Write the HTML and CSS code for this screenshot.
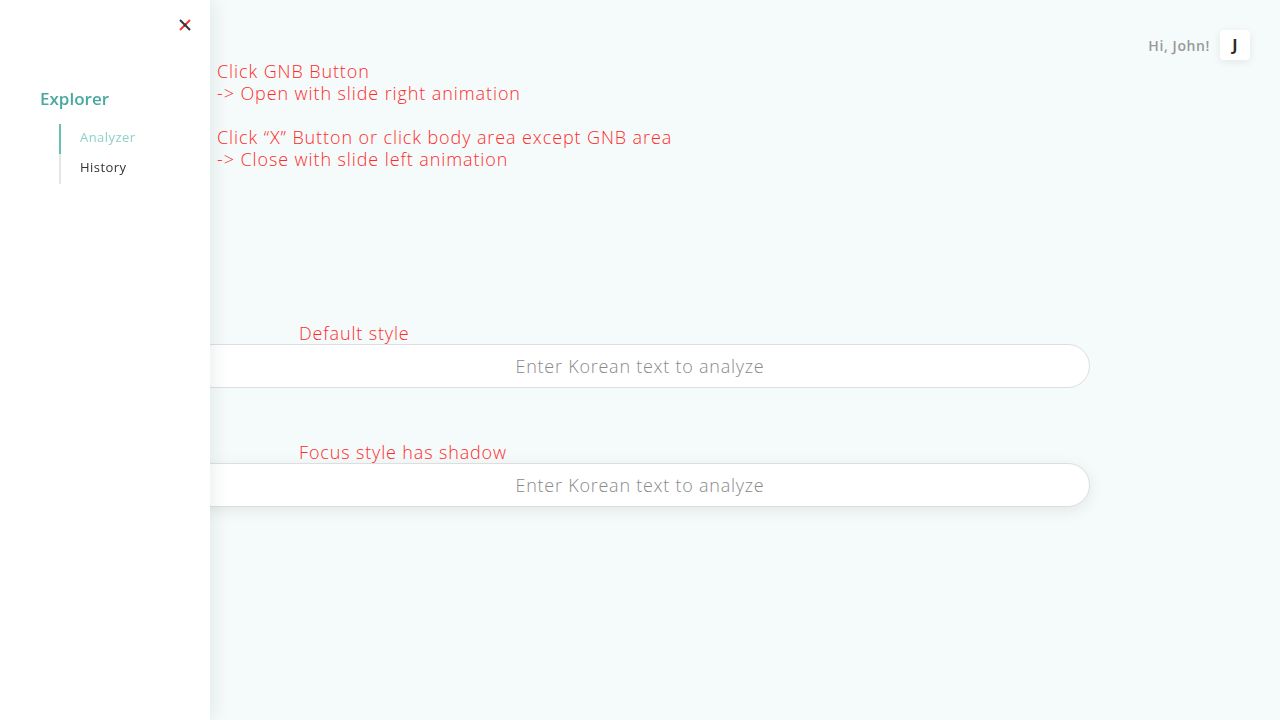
FILE: index.html
```html
<!DOCTYPE html>
<html lang="en">
<head>
<meta charset="utf-8">
<title>Explorer</title>
<link rel="stylesheet" href="styles.css">
</head>
<body>
<main class="main">
  <header class="topbar">
    <span class="greeting">Hi, John!</span>
    <span class="avatar">J</span>
  </header>
  <div class="notes">
    <p>Click GNB Button<br>-&gt; Open with slide right animation</p>
    <p>Click “X” Button or click body area except GNB area<br>-&gt; Close with slide left animation</p>
  </div>
  <section class="inputs">
    <div class="field">
      <div class="label">Default style</div>
      <div class="search">Enter Korean text to analyze</div>
    </div>
    <div class="field">
      <div class="label">Focus style has shadow</div>
      <div class="search focus">Enter Korean text to analyze</div>
    </div>
  </section>
</main>
<aside class="gnb">
  <div class="gnb-top">
    <button class="close" aria-label="Close">
      <svg width="14" height="14" viewBox="0 0 14 14">
        <line x1="2" y1="2" x2="12" y2="12" stroke="#333" stroke-width="2"/>
        <line x1="12" y1="2" x2="2" y2="12" stroke="#f03a3a" stroke-width="2"/>
        <line x1="8" y1="6" x2="6" y2="8" stroke="#333" stroke-width="2"/>
      </svg>
    </button>
  </div>
  <nav class="menu">
    <div class="menu-title">Explorer</div>
    <ul class="submenu">
      <li class="active">Analyzer</li>
      <li>History</li>
    </ul>
  </nav>
</aside>
</body>
</html>
```
FILE: styles.css
```css
html, body {
  margin: 0;
  padding: 0;
}
body {
  background: #f5fafa;
  font-family: "Open Sans", "DejaVu Sans", sans-serif;
  width: 1280px;
  height: 720px;
  overflow: hidden;
}
.main {
  display: flex;
  flex-direction: column;
  padding: 30px 30px 0 217px;
}
.topbar {
  display: flex;
  justify-content: flex-end;
  align-items: center;
  gap: 10px;
  height: 30px;
}
.greeting {
  font-size: 14px;
  font-weight: 600;
  color: #999;
  letter-spacing: 0.6px;
}
.avatar {
  width: 30px;
  height: 30px;
  background: #fff;
  border-radius: 4px;
  box-shadow: 0 2px 8px rgba(0, 0, 0, 0.08);
  display: flex;
  align-items: center;
  justify-content: center;
  font-weight: 700;
  font-size: 16px;
  color: #2a2a2a;
}
.notes {
  color: #ff2a2a;
  font-size: 18px;
  font-weight: 300;
  line-height: 22px;
  letter-spacing: 0.9px;
}
.notes p {
  margin: 0 0 22px 0;
}
.notes p:last-child {
  margin-bottom: 0;
}
.inputs {
  margin-top: 152px;
  margin-left: -27px;
  width: 900px;
  display: flex;
  flex-direction: column;
  gap: 53px;
}
.label {
  padding-left: 109px;
  color: #ff2a2a;
  font-size: 18px;
  font-weight: 300;
  line-height: 22px;
  letter-spacing: 0.85px;
}
.search {
  height: 42px;
  border: 1px solid #dedede;
  border-radius: 22px;
  background: #fff;
  display: flex;
  align-items: center;
  justify-content: center;
  font-size: 18px;
  font-weight: 300;
  color: #8a8a8a;
  letter-spacing: 0.75px;
}
.search.focus {
  box-shadow: 0 4px 16px rgba(0, 0, 0, 0.08);
}
.gnb {
  position: fixed;
  left: 0;
  top: 0;
  width: 210px;
  height: 720px;
  background: #fff;
  box-shadow: 4px 0 16px rgba(0, 60, 60, 0.08);
  display: flex;
  flex-direction: column;
}
.gnb-top {
  display: flex;
  justify-content: flex-end;
  padding: 18px 18px 0 0;
}
.close {
  width: 14px;
  height: 14px;
  padding: 0;
  border: 0;
  background: none;
  display: block;
}
.close svg {
  display: block;
}
.menu {
  padding: 55px 0 0 40px;
}
.menu-title {
  color: #4aa8a0;
  font-size: 17px;
  font-weight: 600;
  line-height: 24px;
}
.submenu {
  list-style: none;
  margin: 13px 0 0 19px;
  padding: 0;
  border-left: 2px solid #e4e6e6;
}
.submenu li {
  height: 30px;
  line-height: 27px;
  padding-left: 19px;
  font-size: 13px;
  color: #333;
  margin-left: -2px;
  border-left: 2px solid transparent;
  letter-spacing: 0.45px;
}
.submenu li.active {
  color: #8fcfca;
  border-left-color: #6dbdb6;
}
```
